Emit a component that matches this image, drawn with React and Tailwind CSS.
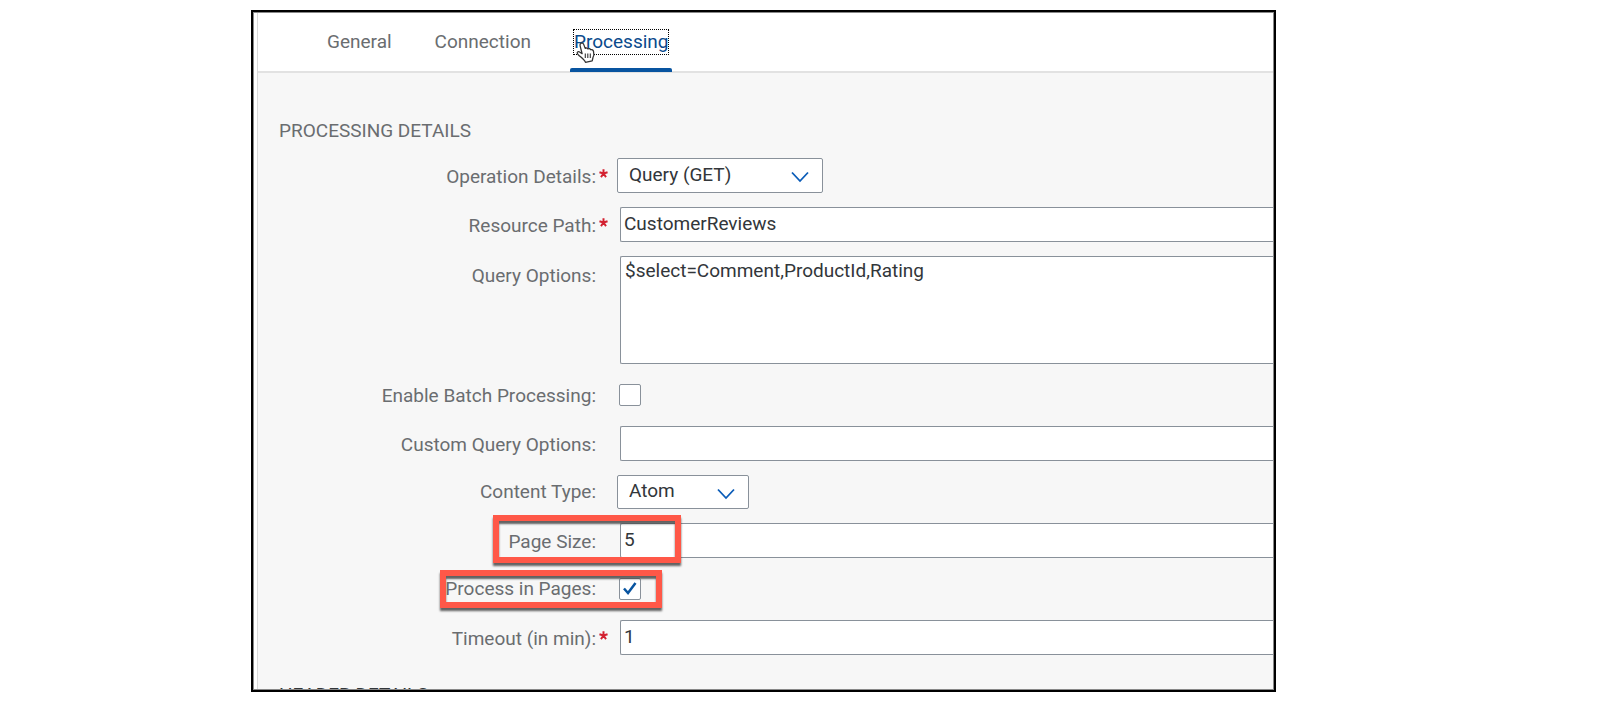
import React from "react";

const fieldBorder = "border border-[#89919a]";

function Row({ id, label, required, className = "h-[35px]", labelClass = "items-center pt-0.5", highlight, children }) {
  return (
    <div className={`relative grid grid-cols-[338px_1fr] gap-x-6 ${className}`}>
      <label htmlFor={id} className={`flex justify-end text-[#6a6d70] ${labelClass}`}>
        <span className="relative whitespace-nowrap leading-6">
          {label}:
          {required && (
            <svg viewBox="0 0 10 10" className="absolute top-1 left-full ml-[3px] size-[9px]" stroke="#d32030" strokeWidth="2.2" aria-label="required">
              <path d="M5 0.3V5M0.5 3.6L5 5M9.5 3.6L5 5M2.2 9L5 5M7.8 9L5 5" />
            </svg>
          )}
        </span>
      </label>
      <div className="flex min-w-0 items-center">{children}</div>
      {highlight && (
        <span
          className={`pointer-events-none absolute border-[6px] border-[#ff5848] shadow-[0_3px_2px_rgba(60,60,60,0.8),inset_0_3px_2px_rgba(60,60,60,0.8)] ${highlight}`}
        />
      )}
    </div>
  );
}

function TextField({ id, value }) {
  return (
    <input
      id={id}
      type="text"
      defaultValue={value}
      className={`h-full w-full rounded-l-xs bg-white pb-0.5 pl-[3px] text-[#32363a] outline-none ${fieldBorder} border-r-0`}
    />
  );
}

function SelectField({ id, options, className }) {
  return (
    <div className={`relative -ml-[3px] h-full ${className}`}>
      <select
        id={id}
        className={`h-full w-full appearance-none rounded-xs bg-white pb-0.5 pl-[11px] text-[#32363a] outline-none ${fieldBorder}`}
      >
        {options.map((o) => (
          <option key={o}>{o}</option>
        ))}
      </select>
      <svg viewBox="0 0 18 12" className="pointer-events-none absolute top-[13px] right-[14px] h-3 w-[18px]" fill="none" stroke="#0a5cb8" strokeWidth="1.8">
        <path d="M1 1.5L9 10L17 1.5" />
      </svg>
    </div>
  );
}

function CheckField({ id, checked }) {
  return (
    <div className="relative -ml-px size-[22px]">
      <input
        id={id}
        type="checkbox"
        defaultChecked={checked}
        className={`peer block size-full appearance-none rounded-xs bg-white ${fieldBorder}`}
      />
      <svg viewBox="0 0 22 22" className="pointer-events-none absolute inset-0 hidden size-full peer-checked:block" fill="none" stroke="#0854a0" strokeWidth="2.5">
        <path d="M5 10.5L9 15L16.5 5" />
      </svg>
    </div>
  );
}

function HandCursor() {
  return (
    <svg viewBox="0 0 20 22" className="pointer-events-none absolute top-3 left-1.5 h-[22px] w-5" fill="#fff" stroke="#333" strokeWidth="1.3" strokeLinejoin="round">
      <path d="M5.2 1.2C6.5 0.7 7.4 1.4 7.8 2.6L9.2 6.4C10.2 5.6 11.4 6 11.9 6.9C13 6.2 14.2 6.7 14.6 7.7C16 7.2 17.2 8 17.5 9.3C18.2 12 18.2 13.5 17 15.5L16.2 18.8L9.5 20.3C8.5 18 6 16 3.8 14.2C2.4 13 1 11.7 1.2 10.6C1.6 9.4 3 9.5 4 10.2L6.1 11.6L4.1 3.8C3.8 2.6 4.2 1.6 5.2 1.2Z" />
      <path d="M9.3 11.5V16M11.8 11.5V16M14.3 11.5V16" strokeWidth="1.1" />
    </svg>
  );
}

export default function App() {
  return (
    <div className="min-h-screen bg-white pt-[10px] pr-[324px] pb-[10px] pl-[251px] font-['Roboto',sans-serif] text-[19px] leading-6">
      <main className="overflow-hidden border-2 border-black">
        <div className="border border-[#888] bg-white pl-[3px]">
          <div className="border-l border-[#d9d9d9]">
            <nav className="flex h-[60px] items-start gap-[43px] border-b-2 border-[#e2e2e2] pt-[17px] pl-[69px] text-[#6a6d70]">
              <a href="#general">General</a>
              <a href="#connection">Connection</a>
              <a
                href="#processing"
                aria-current="page"
                className="relative -ml-1 h-[42px] text-[#0a4a8c]"
              >
                <span className="block px-1">
                  <span className="block outline-1 outline-dotted outline-black">Processing</span>
                </span>
                <span className="absolute inset-x-0 bottom-0 h-1 rounded-t-xs bg-[#0854a0]" />
                <HandCursor />
              </a>
            </nav>

            <div className="bg-[#f7f7f7]">
              <section className="pt-[46px]">
                <h2 className="mb-[15px] pl-[21px] text-[#6a6d70]">PROCESSING DETAILS</h2>
                <form className="flex flex-col gap-3.5">
                  <Row id="operation" label="Operation Details" required>
                    <SelectField id="operation" options={["Query (GET)"]} className="w-[206px]" />
                  </Row>
                  <Row id="path" label="Resource Path" required>
                    <TextField id="path" value="CustomerReviews" />
                  </Row>
                  <Row id="query" label="Query Options" className="h-[108px]" labelClass="items-start pt-2">
                    <textarea
                      id="query"
                      defaultValue="$select=Comment,ProductId,Rating"
                      className={`h-full w-full resize-none rounded-l-xs bg-white pt-0.5 pl-1 text-[#32363a] outline-none ${fieldBorder} border-r-0`}
                    />
                  </Row>
                  <Row id="batch" label="Enable Batch Processing" className="h-[34px]">
                    <CheckField id="batch" />
                  </Row>
                  <Row id="custom" label="Custom Query Options">
                    <TextField id="custom" value="" />
                  </Row>
                  <Row id="content" label="Content Type" className="h-[34px]" labelClass="items-center">
                    <SelectField id="content" options={["Atom"]} className="w-[132px]" />
                  </Row>
                  <Row id="size" label="Page Size" highlight="-top-2 left-[235px] h-12 w-[188px]">
                    <TextField id="size" value="5" />
                  </Row>
                  <Row id="pages" label="Process in Pages" className="h-[34px]" labelClass="items-center" highlight="-top-0.5 left-[182px] h-[38px] w-[222px]">
                    <CheckField id="pages" checked />
                  </Row>
                  <Row id="timeout" label="Timeout (in min)" required>
                    <TextField id="timeout" value="1" />
                  </Row>
                </form>
              </section>
              <section className="h-[34px] overflow-hidden pt-7">
                <h2 className="pl-[21px] text-[#32363a]">HEADER DETAILS</h2>
              </section>
            </div>
          </div>
        </div>
      </main>
    </div>
  );
}
